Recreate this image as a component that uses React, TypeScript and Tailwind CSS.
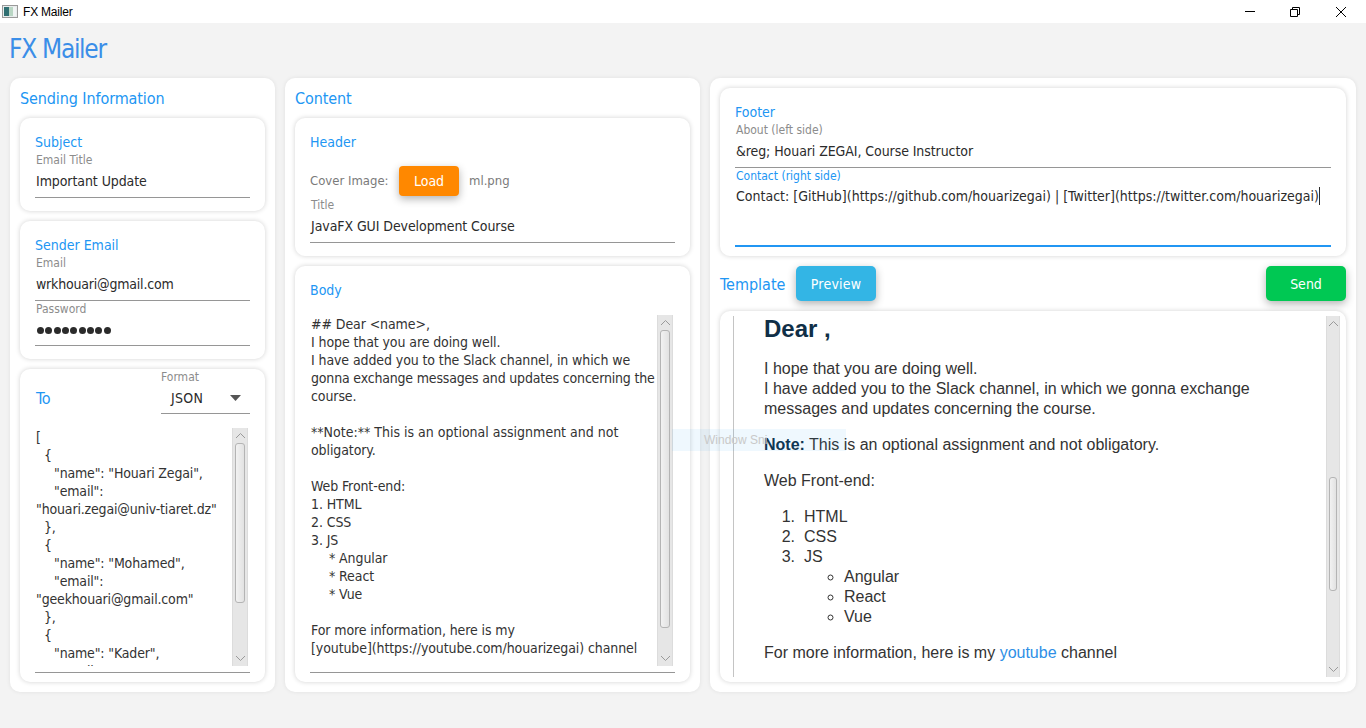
import React from "react";

const Chevron = ({ up }: { up?: boolean }) => (
  <svg width="11" height="7" viewBox="0 0 11 7" className="block" fill="none" stroke="#9a9a9a" strokeWidth="1">
    <path d={up ? "M1 6L5.5 1.5L10 6" : "M1 1L5.5 5.5L10 1"} />
  </svg>
);

const Scrollbar = ({ outer, thumb }: { outer: string; thumb: string }) => (
  <div className={`flex shrink-0 flex-col items-center bg-[#e6e6e6] border-x border-[#dcdcdc] ${outer}`}>
    <div className="flex h-[15px] w-full shrink-0 items-center justify-center"><Chevron up /></div>
    <div className={`w-[calc(100%-4px)] rounded-[3px] border border-[#b4b4b4] bg-gradient-to-r from-[#f2f2f2] to-[#e2e2e2] ${thumb}`} />
    <div className="flex-1" />
    <div className="flex h-[15px] w-full shrink-0 items-center justify-center"><Chevron /></div>
  </div>
);

const SubLabel = ({ children, blue, high }: { children: React.ReactNode; blue?: boolean; high?: boolean }) => (
  <div className={`h-[16px] pl-px text-[12px] leading-[16px] ${high ? "" : "pt-px"} ${blue ? "text-[#2196f3]" : "text-[#8c8c8c]"}`}>{children}</div>
);

const Value = ({ children, tight }: { children: React.ReactNode; tight?: boolean }) => (
  <div className={`h-[31px] border-b border-[#969696] pl-px pt-[5px] text-[14px] leading-[18px] text-[#2b2b2b] ${tight ? "tracking-[-0.2px]" : "tracking-[-0.08px]"}`}>{children}</div>
);

const Section = ({ children }: { children: React.ReactNode }) => (
  <div className="h-[18px] text-[14px] leading-[18px] text-[#2196f3]">{children}</div>
);

const Panel = ({ className, children }: { className: string; children: React.ReactNode }) => (
  <div className={`flex flex-col rounded-[10px] bg-white px-[10px] shadow-[0_0_4px_rgba(0,0,0,0.08)] ${className}`}>{children}</div>
);

const Card = ({ className, children }: { className: string; children: React.ReactNode }) => (
  <div className={`rounded-[10px] bg-white shadow-[0_0_5px_rgba(0,0,0,0.18)] ${className}`}>{children}</div>
);

const PanelTitle = ({ children }: { children: React.ReactNode }) => (
  <div className="flex h-[40px] shrink-0 items-center pt-[2px] text-[16px] tracking-[-0.1px] text-[#2196f3]">{children}</div>
);

type Line = [number, string, string?];

const toLines: Line[] = [
  [0, "["],
  [1, "{"],
  [2, "\"name\": \"Houari Zegai\","],
  [2, "\"email\":"],
  [0, "\"houari.zegai@univ-tiaret.dz\""],
  [1, "},"],
  [1, "{"],
  [2, "\"name\": \"Mohamed\","],
  [2, "\"email\":"],
  [0, "\"geekhouari@gmail.com\""],
  [1, "},"],
  [1, "{"],
  [2, "\"name\": \"Kader\","],
  [2, "\"email\":"],
];

const bodyLines: Line[] = [
  [0, "## Dear <name>,"],
  [0, "I hope that you are doing well."],
  [0, "I have added you to the Slack channel, in which we"],
  [0, "gonna exchange messages and updates concerning the", "tracking-[-0.18px]"],
  [0, "course."],
  [0, "\u00a0"],
  [0, "**Note:** This is an optional assignment and not", "tracking-[0px]"],
  [0, "obligatory."],
  [0, "\u00a0"],
  [0, "Web Front-end:"],
  [0, "1. HTML"],
  [0, "2. CSS"],
  [0, "3. JS"],
  [2, "* Angular"],
  [2, "* React"],
  [2, "* Vue"],
  [0, "\u00a0"],
  [0, "For more information, here is my"],
  [0, "[youtube](https://youtube.com/houarizegai) channel"],
];

const TextLines = ({ lines, tracking }: { lines: Line[]; tracking: string }) => (
  <>
    {lines.map(([indent, text, own], i) => (
      <div
        key={i}
        className={`whitespace-nowrap text-[14px] leading-[18px] text-[#333333] ${own ?? tracking} ${indent === 2 ? "pl-[18px]" : indent === 1 ? "pl-[8px]" : ""}`}
      >
        {text}
      </div>
    ))}
  </>
);

const Numbered = ({ n, children }: { n: number; children: React.ReactNode }) => (
  <li className="flex">
    <span className="mr-[9px] w-[31px] shrink-0 text-right">{n}.</span>
    <div>{children}</div>
  </li>
);

export default function App() {
  return (
    <div className="relative flex h-[728px] w-[1366px] flex-col overflow-hidden bg-[#f3f3f3] font-['DejaVu_Sans_Condensed','Noto_Sans',sans-serif]">
      {/* Title bar */}
      <div className="flex h-[23px] shrink-0 items-center bg-white pl-[2px]">
        <svg width="16" height="13" viewBox="0 0 16 13" className="shrink-0">
          <rect x="0.5" y="0.5" width="15" height="12" fill="#e8ecec" stroke="#9a9a9a" />
          <rect x="2" y="2" width="5" height="9" fill="#2f6f72" />
          <rect x="7" y="2" width="4" height="9" fill="#b9d6c4" />
          <rect x="11" y="2" width="3" height="9" fill="#f0f4f4" />
        </svg>
        <div className="ml-[5px] font-['Liberation_Sans',sans-serif] text-[12px] tracking-[-0.2px] text-black">FX Mailer</div>
        <div className="flex-1" />
        <svg width="12" height="12" viewBox="0 0 12 12" className="mr-[33px]" fill="none" stroke="#000">
          <path d="M1 5.5H11" />
        </svg>
        <svg width="12" height="12" viewBox="0 0 12 12" className="mr-[34px]" fill="none" stroke="#000">
          <path d="M1.5 3.5H8.5V10.5H1.5Z" />
          <path d="M3.5 3.5V1.5H10.5V8.5H8.5" />
        </svg>
        <svg width="12" height="12" viewBox="0 0 12 12" className="mr-[19px]" fill="none" stroke="#000">
          <path d="M1 1L11 11M11 1L1 11" />
        </svg>
      </div>

      {/* App heading */}
      <div className="flex h-[55px] shrink-0 items-center pb-[3px] pl-[9px] text-[26px] tracking-[-1.3px] text-[#3b8ee8]">FX Mailer</div>

      {/* Columns */}
      <div className="flex h-[614px] gap-[10px] px-[10px]">
        {/* Sending information */}
        <Panel className="w-[265px] shrink-0">
          <PanelTitle>Sending Information</PanelTitle>
          <div className="flex flex-col gap-[10px]">
            <Card className="h-[93px] px-[15px] pt-[15px]">
              <Section>Subject</Section>
              <SubLabel>Email Title</SubLabel>
              <Value>Important Update</Value>
            </Card>
            <Card className="h-[138px] px-[15px] pt-[15px]">
              <Section>Sender Email</Section>
              <SubLabel>Email</SubLabel>
              <Value tight>wrkhouari@gmail.com</Value>
              <SubLabel high>Password</SubLabel>
              <div className="flex h-[29px] items-center gap-[1.35px] border-b border-[#969696] pb-[2px] pl-[2px]">
                {[0, 1, 2, 3, 4, 5, 6, 7, 8].map((i) => (
                  <span key={i} className="h-[7px] w-[7px] rounded-full bg-[#2b2b2b]" />
                ))}
              </div>
            </Card>
            <Card className="h-[313px] px-[15px]">
              <div className="flex items-end justify-between">
                <div className="flex h-[29px] items-center pb-[2px] pl-px text-[16px] tracking-[-0.3px] text-[#2196f3]">To</div>
                <div className="w-[89px]">
                  <div className="h-[16px] text-[12px] leading-[16px] text-[#8c8c8c]">Format</div>
                  <div className="flex h-[29px] items-center justify-between border-b border-[#969696] pb-[2px] pl-[10px] pr-[9px] text-[14px] tracking-[0.3px] text-[#2b2b2b]">
                    JSON
                    <svg width="11" height="6" viewBox="0 0 11 6"><path d="M0 0H11L5.5 6Z" fill="#555" /></svg>
                  </div>
                </div>
              </div>
              <div className="mt-[14px] flex h-[238px] pl-px pr-[2px]">
                <div className="flex-1 overflow-hidden">
                  <TextLines tracking="tracking-[-0.16px]" lines={toLines} />
                </div>
                <Scrollbar outer="h-[238px] w-[16px]" thumb="h-[160px]" />
              </div>
              <div className="mt-[6px] border-b border-[#969696]" />
            </Card>
          </div>
        </Panel>

        {/* Content */}
        <Panel className="w-[415px] shrink-0">
          <PanelTitle>Content</PanelTitle>
          <div className="flex flex-col gap-[10px]">
            <Card className="h-[138px] px-[15px] pt-[15px]">
              <Section>Header</Section>
              <div className="mt-[15px] flex h-[30px] items-center text-[13px] text-[#7a7a7a]">
                <span className="w-[89px]">Cover Image:</span>
                <button className="h-[30px] w-[60px] rounded-[4px] bg-[#ff8800] text-[14px] text-white shadow-[0_3px_8px_rgba(0,0,0,0.3)]">Load</button>
                <span className="ml-[10px]">ml.png</span>
              </div>
              <SubLabel>Title</SubLabel>
              <Value>JavaFX GUI Development Course</Value>
            </Card>
            <Card className="h-[416px] px-[15px] pt-[15px]">
              <Section>Body</Section>
              <div className="mt-[16px] flex h-[351px] pl-px pr-[2px]">
                <div className="flex-1 overflow-hidden"><TextLines tracking="tracking-[-0.1px]" lines={bodyLines} /></div>
                <Scrollbar outer="h-[351px] w-[16px]" thumb="h-[298px]" />
              </div>
              <div className="mt-[6px] border-b border-[#969696]" />
            </Card>
          </div>
        </Panel>

        {/* Footer + template */}
        <Panel className="w-[646px] shrink-0 pt-[10px]">
          <Card className="h-[168px] shrink-0 px-[15px] pt-[15px]">
            <Section>Footer</Section>
            <SubLabel>About (left side)</SubLabel>
            <Value>&amp;reg; Houari ZEGAI, Course Instructor</Value>
            <SubLabel blue high>Contact (right side)</SubLabel>
            <div className="flex h-[63px] items-start border-b-2 border-[#2196f3] pl-px pt-[3px] text-[14px] leading-[18px] text-[#2b2b2b]">
              <span className="whitespace-nowrap">Contact: [GitHub](https://github.com/houarizegai) | [Twitter](https://twitter.com/houarizegai)</span>
              <span className="h-[18px] w-px bg-[#2b2b2b]" />
            </div>
          </Card>
          <div className="mt-[10px] flex h-[35px] shrink-0 items-center">
            <div className="w-[66px] pt-[2px] text-[16px] text-[#2196f3]">Template</div>
            <button className="ml-[10px] h-[35px] w-[80px] rounded-[5px] bg-[#33b5e5] pt-px text-[14px] tracking-[0.2px] text-white shadow-[0_3px_8px_rgba(0,0,0,0.3)]">Preview</button>
            <div className="flex-1" />
            <button className="h-[35px] w-[80px] rounded-[5px] bg-[#00c853] pt-px text-[14px] text-white shadow-[0_3px_8px_rgba(0,0,0,0.3)]">Send</button>
          </div>
          <Card className="mt-[10px] flex h-[371px] pb-[5px] pl-[13px] pr-[6px] pt-[5px]">
            <div className="h-[361px] flex-1 overflow-hidden border-l border-[#c4c4c4] pl-[30px] font-['Liberation_Sans',sans-serif] text-[16px] leading-[20px] text-[#333333]">
              <div className="h-[26px] text-[24px] font-bold leading-[26px] text-[#102f47]">Dear ,</div>
              <p className="mt-[17px]">I hope that you are doing well.<br />I have added you to the Slack channel, in which we gonna exchange<br />messages and updates concerning the course.</p>
              <p className="mt-[16px]"><b className="text-[#102f47]">Note:</b> This is an optional assignment and not obligatory.</p>
              <p className="mt-[16px]">Web Front-end:</p>
              <ol className="mt-[16px]">
                <Numbered n={1}>HTML</Numbered>
                <Numbered n={2}>CSS</Numbered>
                <Numbered n={3}>
                  JS
                  <ul className="list-[circle] pl-[40px]">
                    <li>Angular</li>
                    <li>React</li>
                    <li>Vue</li>
                  </ul>
                </Numbered>
              </ol>
              <p className="mt-[16px]">For more information, here is my <span className="text-[#2e8fe6]">youtube</span> channel</p>
            </div>
            <Scrollbar outer="h-[361px] w-[14px]" thumb="mt-[146px] h-[114px]" />
          </Card>
        </Panel>
      </div>

      {/* Ghost "Window Snip" drag image over the page */}
      <div className="pointer-events-none absolute left-[672px] top-[429px] flex h-[22px] w-[174px] items-center bg-[#2196f3]/[0.07] pl-[32px] font-['Liberation_Sans',sans-serif] text-[12px] text-[#c9c9c9]">
        Window Sni
      </div>
    </div>
  );
}
